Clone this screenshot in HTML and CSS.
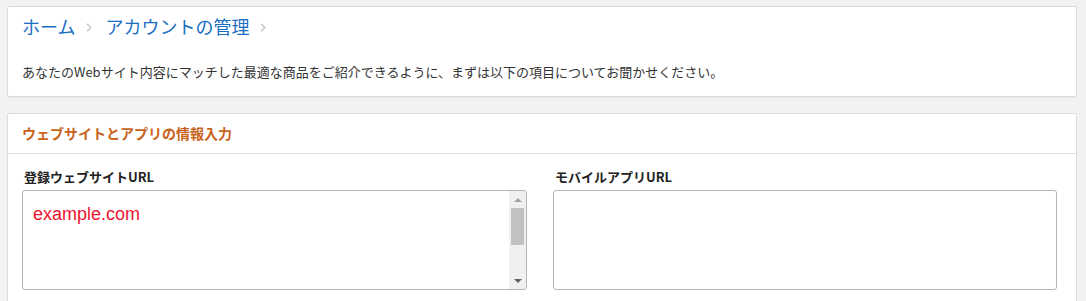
FILE: index.html
```html
<!DOCTYPE html>
<html lang="ja">
<head>
    <meta charset="utf-8">
    <meta name="viewport" content="width=device-width, initial-scale=1.0">
    <title>アカウントの管理</title>
    <link rel="stylesheet" href="styles.css">
</head>
<body>
    <div class="card intro">
        <nav class="breadcrumb">
            <a href="#">ホーム</a>
            <svg class="sep" width="6" height="9" viewBox="0 0 6 9"><path d="M1 0.8 L4.8 4.5 L1 8.2" fill="none" stroke="#c6c6c6" stroke-width="1.4"/></svg>
            <a href="#">アカウントの管理</a>
            <svg class="sep" width="6" height="9" viewBox="0 0 6 9"><path d="M1 0.8 L4.8 4.5 L1 8.2" fill="none" stroke="#c6c6c6" stroke-width="1.4"/></svg>
        </nav>
        <p class="lead">あなたのWebサイト内容にマッチした最適な商品をご紹介できるように、まずは以下の項目についてお聞かせください。</p>
    </div>

    <div class="card form-card">
        <h2 class="card-title">ウェブサイトとアプリの情報入力</h2>
        <div class="fields">
            <div class="field">
                <label for="site-url">登録ウェブサイトURL</label>
                <div class="input-wrap">
                    <textarea id="site-url" class="site-url">example.com</textarea>
                    <div class="scrollbar">
                        <span class="arrow up"></span>
                        <span class="track"><span class="thumb"></span></span>
                        <span class="arrow down"></span>
                    </div>
                </div>
            </div>
            <div class="field">
                <label for="app-url">モバイルアプリURL</label>
                <div class="input-wrap">
                    <textarea id="app-url"></textarea>
                </div>
            </div>
        </div>
    </div>
</body>
</html>
```

FILE: styles.css
```css
:root {
    --link: #1a6ec4;
    --accent: #c8631c;
    --text: #333333;
    --border: #dcdcdc;
    --background: #f2f2f2;
}

* {
    margin: 0;
    padding: 0;
    box-sizing: border-box;
}

body {
    font-family: "Noto Sans CJK JP", "Noto Sans", sans-serif;
    background: var(--background);
    color: var(--text);
    padding: 6px 9px 0 7px;
}

.card {
    background: #fff;
    border: 1px solid var(--border);
    border-radius: 2px;
    box-shadow: 0 1px 1px rgba(0, 0, 0, 0.05);
}

.intro {
    height: 91px;
    padding: 0 14px;
    margin-bottom: 16px;
}

.breadcrumb {
    display: flex;
    align-items: center;
    height: 38px;
}

.breadcrumb a {
    color: var(--link);
    text-decoration: none;
    font-size: 18px;
    line-height: 24px;
}

.breadcrumb .sep {
    margin: 3px 13px 0 11px;
}

.lead {
    font-size: 13px;
    line-height: 20px;
    margin-top: 17px;
}

.form-card {
    height: 200px;
}

.card-title {
    color: var(--accent);
    font-size: 14px;
    font-weight: bold;
    line-height: 20px;
    padding: 9px 14px 10px;
    border-bottom: 1px solid #e0e0e0;
}

.fields {
    display: grid;
    grid-template-columns: 505px 504px;
    gap: 26px;
    padding: 14px 14px 0;
}

.field label {
    display: block;
    font-size: 13px;
    font-weight: bold;
    line-height: 18px;
    color: #222;
    padding-left: 2px;
    margin-bottom: 4px;
}

.input-wrap {
    position: relative;
}

.input-wrap textarea {
    display: block;
    width: 100%;
    height: 100px;
    border: 1px solid #b4b4b4;
    border-radius: 3px;
    resize: none;
    overflow: hidden;
    outline: none;
    font-family: "Liberation Sans", Arial, sans-serif;
    font-size: 18px;
    line-height: 25px;
    padding: 11px 28px 9px 10px;
    color: #ee1430;
    background: #fff;
}

/* scrollbar drawn over the textarea edge */
.scrollbar {
    position: absolute;
    top: 1px;
    right: 1px;
    bottom: 1px;
    width: 17px;
    background: #f0f0f0;
    border-radius: 0 2px 2px 0;
    display: flex;
    flex-direction: column;
}

.scrollbar .arrow {
    height: 17px;
    display: flex;
    justify-content: center;
    align-items: center;
}

.scrollbar .arrow::before {
    content: '';
    border-left: 4px solid transparent;
    border-right: 4px solid transparent;
}

.scrollbar .up::before {
    border-bottom: 4px solid #a3a3a3;
}

.scrollbar .down::before {
    border-top: 4px solid #606060;
}

.scrollbar .track {
    flex: 1;
    padding: 0 2px;
}

.scrollbar .thumb {
    display: block;
    height: 37px;
    background: #c1c1c1;
}
```
